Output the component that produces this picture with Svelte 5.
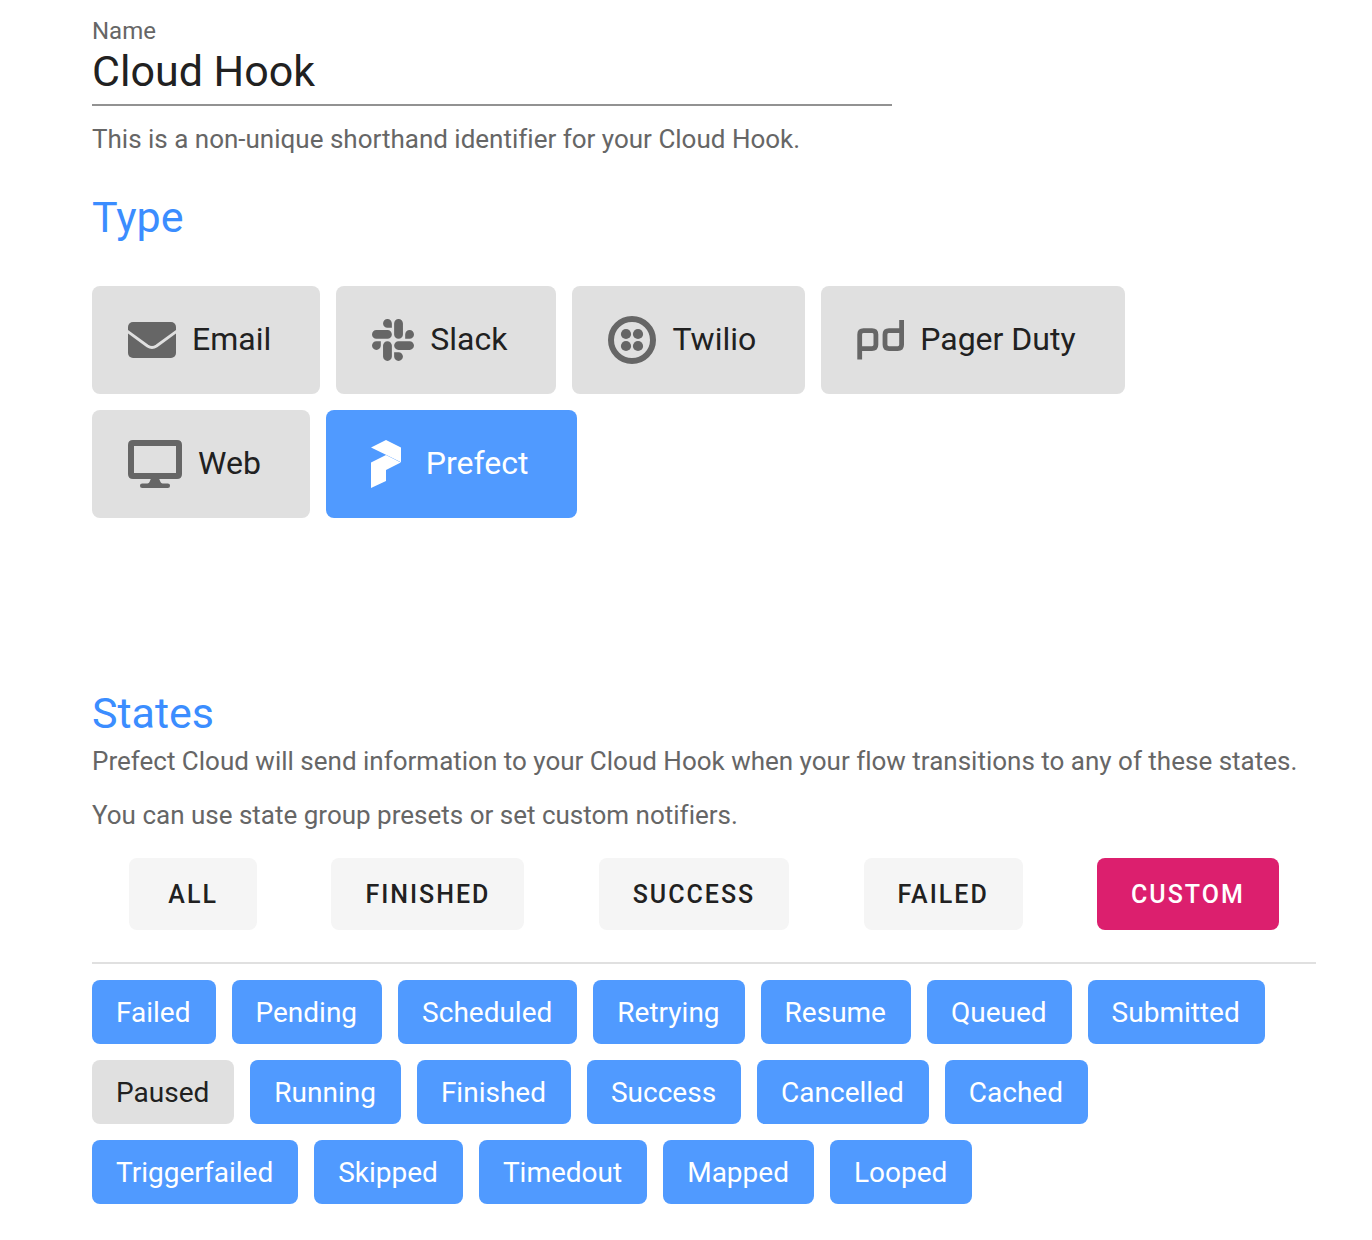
<script>
  let name = $state('Cloud Hook');
  let selectedType = $state('Prefect');
  let selectedPreset = $state('Custom');

  const types = ['Email', 'Slack', 'Twilio', 'Pager Duty', 'Web', 'Prefect'];
  const presets = ['All', 'Finished', 'Success', 'Failed', 'Custom'];

  let states = $state(
    [
      'Failed', 'Pending', 'Scheduled', 'Retrying', 'Resume', 'Queued', 'Submitted',
      'Paused', 'Running', 'Finished', 'Success', 'Cancelled', 'Cached',
      'Triggerfailed', 'Skipped', 'Timedout', 'Mapped', 'Looped'
    ].map((label) => ({ label, on: label !== 'Paused' }))
  );
</script>

<main class="form">
  <div class="field">
    <label for="hook-name">Name</label>
    <input id="hook-name" type="text" bind:value={name} aria-describedby="hook-hint" />
  </div>
  <p class="hint" id="hook-hint">This is a non-unique shorthand identifier for your Cloud Hook.</p>

  <section class="type-section">
    <h2>Type</h2>
    <div class="types">
      {#each types as type}
        <button
          class="type"
          class:active={selectedType === type}
          aria-pressed={selectedType === type}
          onclick={() => (selectedType = type)}
        >
          {#if type === 'Email'}
            <svg width="48" height="36" viewBox="0 0 48 36" aria-hidden="true">
              <rect width="48" height="36" rx="5" fill="currentColor" />
              <path class="cut" d="M-1 9 19.5 24Q24 27 28.5 24L49 9" />
            </svg>
          {:else if type === 'Slack'}
            <svg width="42" height="48" viewBox="0 0 448 512" aria-hidden="true">
              <path fill="currentColor" d="M94.12 315.1c0 25.9-21.16 47.06-47.06 47.06S0 341 0 315.1c0-25.9 21.16-47.06 47.06-47.06h47.06v47.06zm23.72 0c0-25.9 21.16-47.06 47.06-47.06s47.06 21.16 47.06 47.06v117.84c0 25.9-21.16 47.06-47.06 47.06s-47.06-21.16-47.06-47.06V315.1zm47.06-188.98c-25.9 0-47.06-21.16-47.06-47.06S139 32 164.9 32s47.06 21.16 47.06 47.06v47.06H164.9zm0 23.72c25.9 0 47.06 21.16 47.06 47.06s-21.16 47.06-47.06 47.06H47.06C21.16 243.96 0 222.8 0 196.9s21.16-47.06 47.06-47.06H164.9zm188.98 47.06c0-25.9 21.16-47.06 47.06-47.06 25.9 0 47.06 21.16 47.06 47.06s-21.16 47.06-47.06 47.06h-47.06V196.9zm-23.72 0c0 25.9-21.16 47.06-47.06 47.06-25.9 0-47.06-21.16-47.06-47.06V79.06c0-25.9 21.16-47.06 47.06-47.06 25.9 0 47.06 21.16 47.06 47.06V196.9zM283.1 385.88c25.9 0 47.06 21.16 47.06 47.06 0 25.9-21.16 47.06-47.06 47.06-25.9 0-47.06-21.16-47.06-47.06v-47.06h47.06zm0-23.72c-25.9 0-47.06-21.16-47.06-47.06 0-25.9 21.16-47.06 47.06-47.06h117.84c25.9 0 47.06 21.16 47.06 47.06 0 25.9-21.16 47.06-47.06 47.06H283.1z" />
            </svg>
          {:else if type === 'Twilio'}
            <svg width="48" height="48" viewBox="0 0 48 48" aria-hidden="true">
              <circle cx="24" cy="24" r="21" fill="none" stroke="currentColor" stroke-width="6" />
              <g fill="currentColor">
                <circle cx="18" cy="18" r="5.1" />
                <circle cx="30" cy="18" r="5.1" />
                <circle cx="18" cy="30" r="5.1" />
                <circle cx="30" cy="30" r="5.1" />
              </g>
            </svg>
          {:else if type === 'Pager Duty'}
            <svg width="47" height="40" viewBox="0 0 47 40" aria-hidden="true">
              <g fill="none" stroke="currentColor" stroke-width="4.8">
                <path d="M2.7 39.6V14.5Q2.7 10.7 6.5 10.7H15Q18.9 10.7 18.9 14.5V24.8Q18.9 28.6 15 28.6H2.7" />
                <path d="M44.6 0V24.8Q44.6 28.6 40.7 28.6H32Q28 28.6 28 24.8V14.5Q28 10.7 32 10.7H44.6" />
              </g>
            </svg>
          {:else if type === 'Web'}
            <svg width="54" height="48" viewBox="0 0 54 48" aria-hidden="true">
              <path fill="currentColor" fill-rule="evenodd" d="M5 0H49Q54 0 54 5V34Q54 39 49 39H5Q0 39 0 34V5Q0 0 5 0ZM6 6V33H48V6Z" />
              <path fill="currentColor" d="M23 38.5H31L32.5 42Q33 43.3 34.5 43.5H39.8A2.2 2.2 0 0 1 39.8 48H14.2A2.2 2.2 0 0 1 14.2 43.5H19.5Q21 43.3 21.5 42Z" />
            </svg>
          {:else}
            <svg width="48" height="48" viewBox="0 0 48 48" aria-hidden="true">
              <path fill="currentColor" d="M9 7.4 24 0 39 7.4V22.2L24 14.8Z" />
              <path fill="currentColor" d="M24 15.1 38.8 22.5 24 30V41L9 48V22.4Z" />
            </svg>
          {/if}
          <span>{type}</span>
        </button>
      {/each}
    </div>
  </section>

  <section class="state-section">
    <h2>States</h2>
    <p>Prefect Cloud will send information to your Cloud Hook when your flow transitions to any of these states.</p>
    <p>You can use state group presets or set custom notifiers.</p>

    <div class="presets">
      {#each presets as preset}
        <button
          class="preset"
          class:active={selectedPreset === preset}
          aria-pressed={selectedPreset === preset}
          onclick={() => (selectedPreset = preset)}
        >{preset}</button>
      {/each}
    </div>

    <hr />

    <div class="chips">
      {#each states as item}
        <button
          class="chip"
          class:active={item.on}
          aria-pressed={item.on}
          onclick={() => (item.on = !item.on)}
        >{item.label}</button>
      {/each}
    </div>
  </section>
</main>

<style>
  :global(body) {
    margin: 0;
    background: #fff;
  }

  .form {
    padding: 16px 56px 36px 92px;
    font-family: Roboto, 'Liberation Sans', sans-serif;
    font-variant-ligatures: none;
    color: #212121;
  }

  .field {
    display: flex;
    flex-direction: column;
    max-width: 800px;
  }

  label {
    font-size: 24px;
    line-height: 30px;
    color: #666;
  }

  input {
    height: 60px;
    box-sizing: border-box;
    padding: 0 0 8px;
    border: 0;
    border-bottom: 2px solid #929292;
    outline: 0;
    background: transparent;
    font: 400 43px/50px Roboto, 'Liberation Sans', sans-serif;
    color: #212121;
  }

  p {
    margin: 0;
    font-size: 26px;
    line-height: 36px;
    color: #666;
  }

  .hint {
    margin-top: 15px;
  }

  h2 {
    margin: 0;
    font-size: 43px;
    font-weight: 400;
    line-height: 52px;
    color: #3b8dff;
  }

  button {
    border: 0;
    border-radius: 8px;
    font-family: inherit;
    color: #212121;
    cursor: pointer;
  }

  .type-section {
    margin-top: 34px;
  }

  .types {
    display: flex;
    flex-wrap: wrap;
    gap: 16px;
    margin-top: 43px;
  }

  .type {
    display: flex;
    align-items: center;
    gap: 16px;
    height: 108px;
    padding: 0 49px 0 36px;
    background: #e0e0e0;
    font-size: 32px;
  }

  .type span {
    padding-bottom: 2px;
  }

  .type svg {
    flex: none;
    color: #666;
  }

  .cut {
    fill: none;
    stroke: #e0e0e0;
    stroke-width: 2.8;
  }

  .type.active,
  .chip.active {
    background: #509aff;
    color: #fff;
  }

  .type.active svg {
    color: #fff;
  }

  .type.active .cut {
    stroke: #509aff;
  }

  .state-section {
    margin-top: 169px;
  }

  .state-section p {
    margin-top: 4px;
  }

  .state-section p + p {
    margin-top: 18px;
  }

  .presets {
    display: flex;
    justify-content: space-around;
    margin-top: 25px;
  }

  .preset {
    min-width: 128px;
    height: 72px;
    padding: 0 34px;
    background: #f5f5f5;
    font-size: 25px;
    font-weight: 500;
    letter-spacing: 2px;
    text-transform: uppercase;
  }

  .preset.active {
    background: #dc1f6e;
    color: #fff;
  }

  hr {
    height: 2px;
    margin: 32px 0 16px;
    border: 0;
    background: #e0e0e0;
  }

  .chips {
    display: flex;
    flex-wrap: wrap;
    gap: 16px;
    padding-right: 16px;
  }

  .chip {
    height: 64px;
    padding: 0 25px 0 24px;
    background: #e0e0e0;
    font-size: 28px;
  }
</style>
